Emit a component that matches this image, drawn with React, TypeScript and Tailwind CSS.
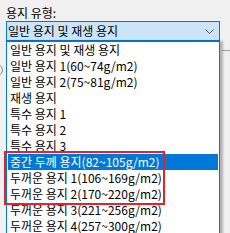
import React from "react";

const paperTypes = [
  "일반 용지 및 재생 용지",
  "일반 용지 1(60~74g/m2)",
  "일반 용지 2(75~81g/m2)",
  "재생 용지",
  "특수 용지 1",
  "특수 용지 2",
  "특수 용지 3",
  "중간 두께 용지(82~105g/m2)",
  "두꺼운 용지 1(106~169g/m2)",
  "두꺼운 용지 2(170~220g/m2)",
  "두꺼운 용지 3(221~256g/m2)",
  "두꺼운 용지 4(257~300g/m2)",
];

const selectedIndex = 7;

export default function App() {
  return (
    <div className="relative w-[230px] h-[233px] overflow-hidden bg-[#f0f0f0] text-[12px] leading-[16px] text-black font-['Malgun_Gothic','Noto_Sans_CJK_KR',sans-serif]">
      {/* Label */}
      <div className="pl-[6px] pt-[5px] h-[21px]">용지 유형:</div>

      {/* Combo box */}
      <div className="ml-[6px] w-[214px] h-[20px] flex items-center justify-between border border-[#0078d7] bg-[#cce4f7] pl-[1px] pr-[5px]">
        <span>일반 용지 및 재생 용지</span>
        <svg width="9" height="5" viewBox="0 0 9 5" fill="none">
          <path d="M0.5 0.5 L4.5 4.5 L8.5 0.5" stroke="#5a5a5a" strokeWidth="1" />
        </svg>
      </div>

      {/* Content behind the open list */}
      <div className="flex justify-between mt-[9px]">
        <div className="w-[12px] h-[12px] rounded-full border border-[#8a8a8a] -ml-[9px] mt-[14px]" />
        <div className="w-[8px] border-t border-[#a0a0a0]" />
      </div>

      {/* Dropdown list */}
      <div className="absolute left-[6px] top-[41px] w-[214px] h-[200px] border border-[#0078d7] bg-white pt-[0px] px-[1px] shadow-[3px_0_2px_rgba(0,0,0,0.25)]">
        {paperTypes.map((t, i) => (
          <div
            key={t}
            className={`h-[16px] pl-[2px] whitespace-nowrap ${
              i === selectedIndex ? "bg-[#0078d7] text-white" : ""
            }`}
          >
            {t}
          </div>
        ))}
      </div>

      {/* Red annotation box */}
      <div className="absolute left-[4px] top-[151px] w-[161px] h-[54px] border-2 border-[#e8202a]" />
    </div>
  );
}
